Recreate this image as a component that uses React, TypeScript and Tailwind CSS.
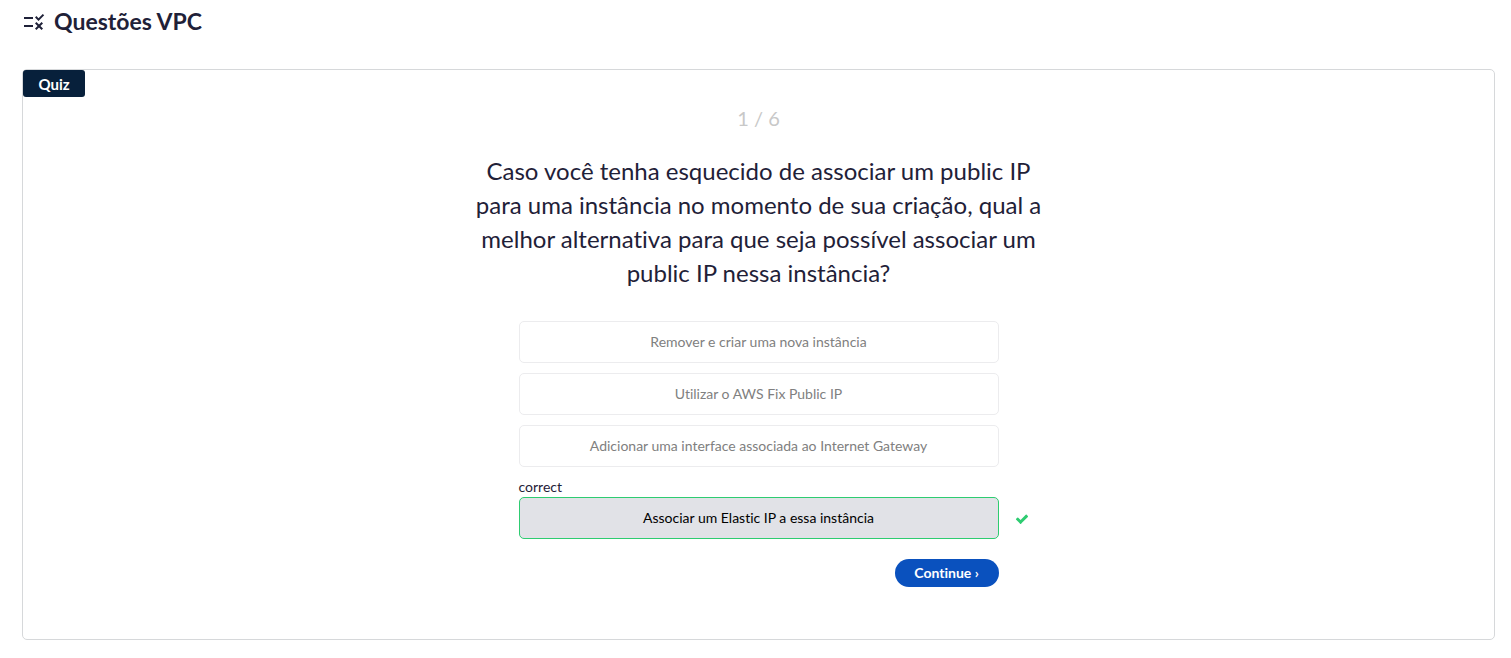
const answers = [
  "Remover e criar uma nova instância",
  "Utilizar o AWS Fix Public IP",
  "Adicionar uma interface associada ao Internet Gateway",
];

function RuleIcon() {
  return (
    <svg viewBox="0 0 24 24" className="size-6 shrink-0" fill="currentColor" aria-hidden="true">
      <path d="M16.54 11 13 7.46l1.41-1.41 2.12 2.12 4.24-4.24 1.41 1.41L16.54 11zM11 7H2v2h9V7zm10 6.41L19.59 12 17 14.59 14.41 12 13 13.41 15.59 16 13 18.59 14.41 20 17 17.41 19.59 20 21 18.59 18.41 16 21 13.41zM11 15H2v2h9v-2z" />
    </svg>
  );
}

export default function App() {
  return (
    <main className="px-4 pb-4 pl-[22px] font-['Lato',sans-serif] text-[#1f2138] [font-variant-ligatures:none]">
      <header className="flex h-[69px] items-start gap-2 pt-[3px]">
        <span className="pt-[7px]"><RuleIcon /></span>
        <h1 className="text-[23px] leading-9 font-bold">Questões VPC</h1>
      </header>
      <section className="min-h-[571px] rounded-[5px] border border-[#d6d8da]">
        <h2 className="flex h-[27px] w-[62px] items-center justify-center rounded-[3px] bg-[#07203b] text-[15px] leading-6 font-bold text-white">
          Quiz
        </h2>
        <div className="mx-auto flex max-w-[580px] flex-col items-center pb-[52px]">
          <p className="mt-[3px] text-xl leading-9 text-[#c8c8c8]">1 / 6</p>
          <p className="mt-[18px] text-center text-2xl leading-[34px]">
            Caso você tenha esquecido de associar um public IP para uma instância no momento de sua criação, qual a melhor alternativa para que seja possível associar um public IP nessa instância?
          </p>
          <div className="mt-[31px] flex w-full max-w-[480px] flex-col gap-[10px] text-sm">
            {answers.map((answer) => (
              <button key={answer} disabled className="h-[42px] rounded-[5px] border border-[#ececee] text-[#808080]">
                {answer}
              </button>
            ))}
            <div className="relative">
              <p className="leading-5">correct</p>
              <button className="h-[42px] w-full rounded-[5px] border border-[#2ecc71] bg-[#e1e2e7] text-black">
                Associar um Elastic IP a essa instância
              </button>
              <svg viewBox="0 0 1792 1792" className="absolute right-[-30px] bottom-[13px] size-[14px]" fill="#2ecc71" aria-hidden="true">
                <path d="M1671 566q0 40-28 68l-724 724-136 136q-28 28-68 28t-68-28l-136-136-362-362q-28-28-28-68t28-68l136-136q28-28 68-28t68 28l294 295 656-657q28-28 68-28t68 28l136 136q28 28 28 68z" />
              </svg>
            </div>
            <button className="mt-[10px] h-7 w-[104px] self-end rounded-full bg-[#0a51be] font-bold text-white">
              Continue ›
            </button>
          </div>
        </div>
      </section>
    </main>
  );
}
